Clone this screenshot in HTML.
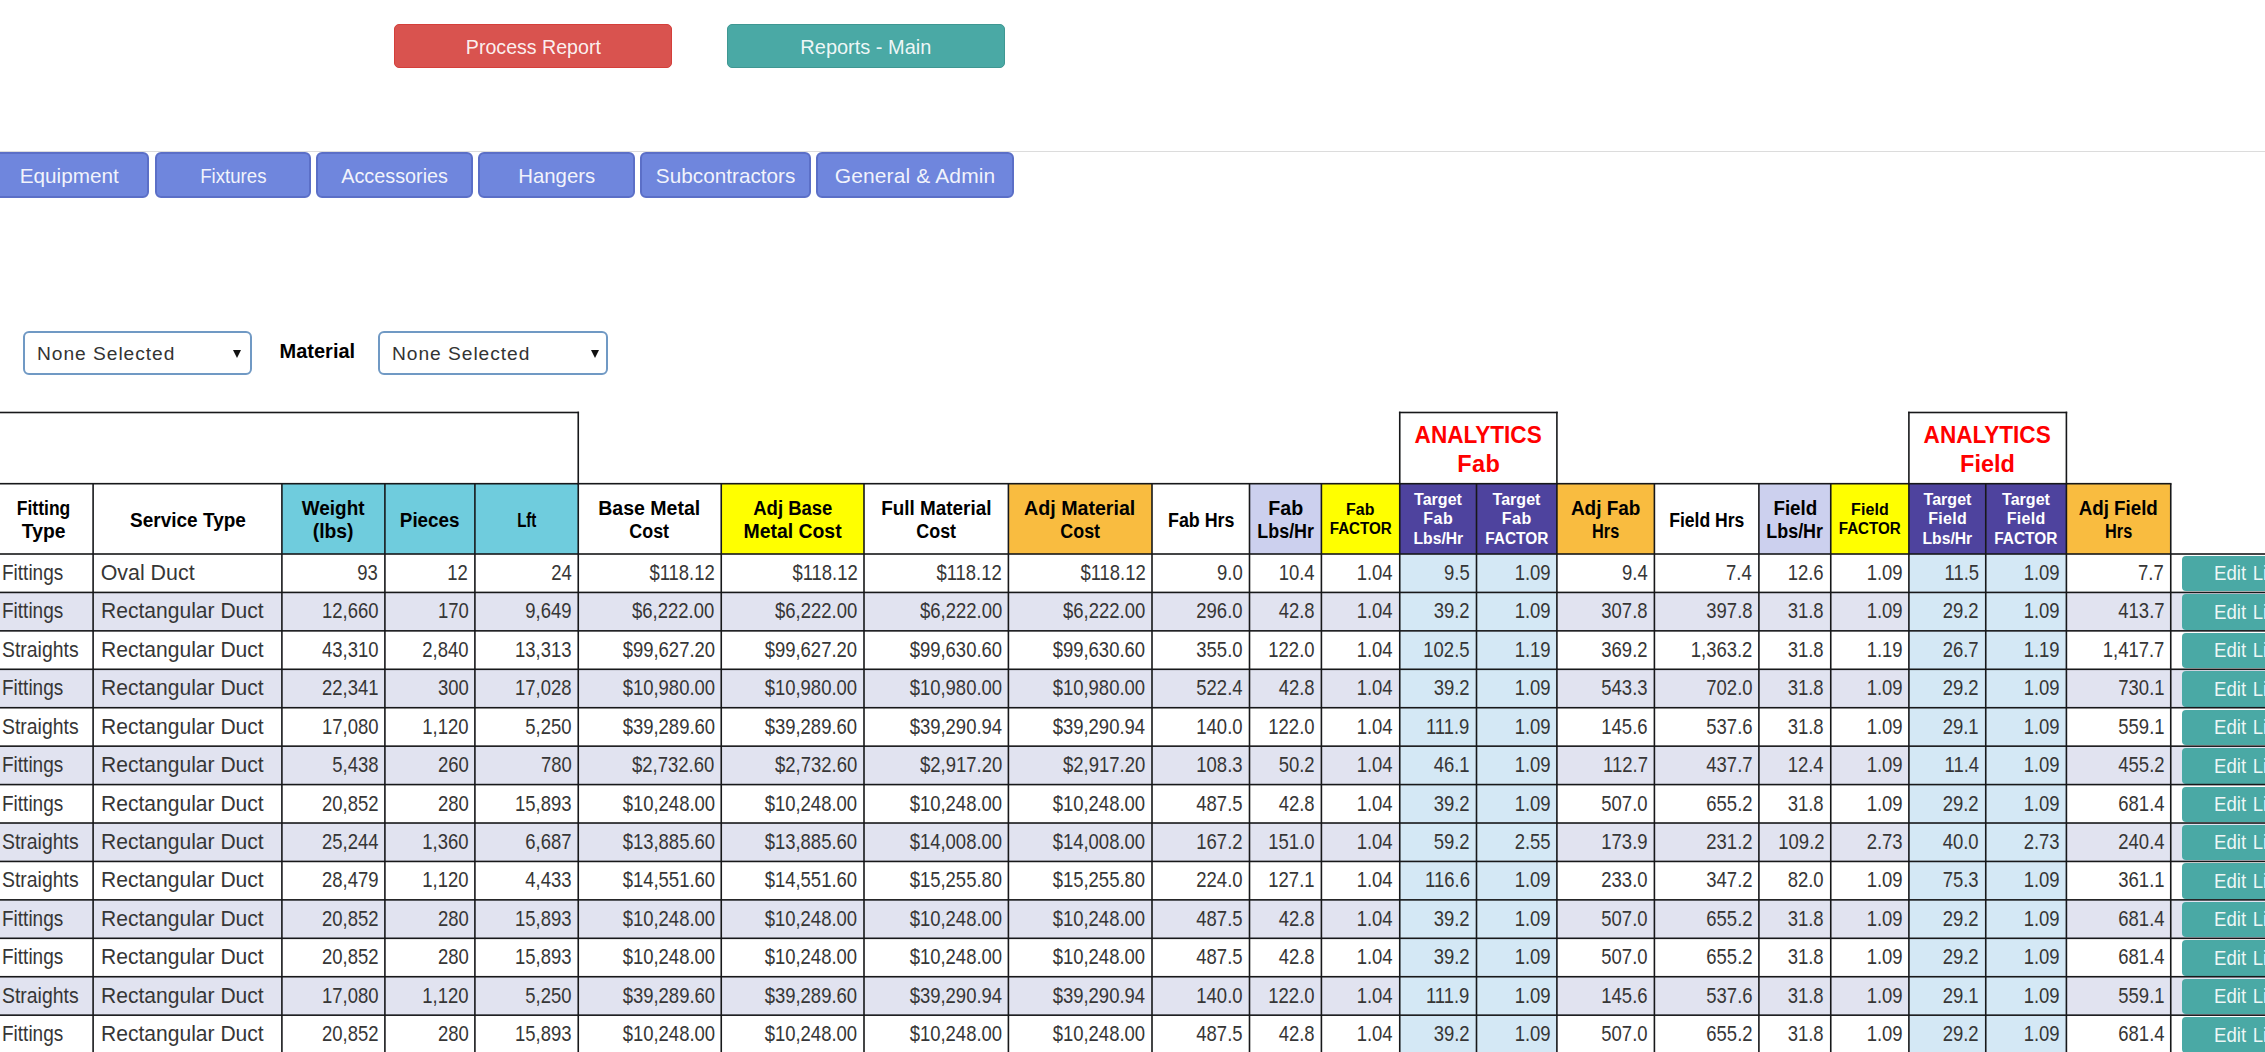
<!DOCTYPE html>
<html><head><meta charset="utf-8"><title>Report</title>
<style>
*{box-sizing:border-box;margin:0;padding:0}
html,body{width:2265px;height:1052px;overflow:hidden;background:#fff}
body{position:relative;font-family:"Liberation Sans",sans-serif;color:#1a1a1a}
.a{position:absolute}
.btn{position:absolute;color:rgba(255,255,255,.92);text-align:center;border-radius:5px;white-space:nowrap}
.top{height:44px;line-height:44.6px;font-size:21px}
.nav{top:152px;height:46px;line-height:44px;font-size:21px;background:#6f86dd;border:2px solid #5b6fc7;border-radius:6px}
.sel{position:absolute;top:331px;height:44px;border:2px solid #7099c4;border-radius:6px;background:#fff;font-size:19.2px;line-height:41px;padding-left:12px;color:#333;white-space:nowrap}
.sel i{position:absolute;top:16.5px;width:0;height:0;border-left:4.2px solid transparent;border-right:4.2px solid transparent;border-top:8px solid #111}
.bg{position:absolute}
.h,.hs,.hw{position:absolute;display:flex;flex-direction:column;justify-content:center;align-items:center;text-align:center;font-weight:bold;color:#000;white-space:nowrap}
.h{font-size:20px;line-height:22.8px;padding-top:2.4px}
.hs{font-size:16px;line-height:19px}
.hw{font-size:16px;line-height:19.4px;color:#fff}
.an{position:absolute;display:flex;flex-direction:column;justify-content:center;align-items:center;text-align:center;font-weight:bold;color:#ff0000;font-size:23.5px;line-height:29px;background:#fff;white-space:nowrap;padding-top:4px}
.d{position:absolute;font-size:21.4px;white-space:nowrap;color:#363636}
.r{text-align:right;padding-right:7.2px}
.r span{display:inline-block;transform:scaleX(.863);transform-origin:100% 50%}
.l{text-align:left;padding-left:6.5px}
.l2{padding-left:7.5px}
.eb{position:absolute;left:2182px;width:120px;background:#4aa9a5;color:rgba(255,255,255,.92);border-radius:4px;font-size:20.8px;padding-left:31.5px;white-space:nowrap}
svg{position:absolute;left:0;top:0}
</style></head><body>

<div class="btn top" style="left:394px;top:24px;width:278px;background:#d9534f;border:1px solid #d43f3a"><span style="display:inline-block;transform:scaleX(0.9327);transform-origin:50% 50%">Process Report</span></div>
<div class="btn top" style="left:727px;top:24px;width:278px;background:#4aa9a5;border:1px solid #3f9792"><span style="display:inline-block;transform:scaleX(0.9513);transform-origin:50% 50%">Reports - Main</span></div>
<div class="a" style="left:0;top:151px;width:2265px;height:1px;background:#dcdcdc"></div>
<div class="btn nav" style="left:-10px;width:159px"><span style="display:inline-block;transform:scaleX(0.9863);transform-origin:50% 50%">Equipment</span></div>
<div class="btn nav" style="left:155px;width:156px"><span style="display:inline-block;transform:scaleX(0.8882);transform-origin:50% 50%">Fixtures</span></div>
<div class="btn nav" style="left:316px;width:157px"><span style="display:inline-block;transform:scaleX(0.9427);transform-origin:50% 50%">Accessories</span></div>
<div class="btn nav" style="left:478px;width:157px"><span style="display:inline-block;transform:scaleX(0.9695);transform-origin:50% 50%">Hangers</span></div>
<div class="btn nav" style="left:640px;width:171px"><span style="display:inline-block;transform:scaleX(0.9877);transform-origin:50% 50%">Subcontractors</span></div>
<div class="btn nav" style="left:816px;width:198px"><span style="letter-spacing:0.126px;margin-right:-0.126px">General &amp; Admin</span></div>
<div class="sel" style="left:23px;width:229px"><span style="letter-spacing:0.958px;margin-right:-0.958px">None Selected</span><i style="right:8.8px"></i></div>
<div class="a" style="left:279px;top:338px;font-size:20.3px;font-weight:bold;color:#000;line-height:27px;white-space:nowrap"><span style="display:inline-block;transform:scaleX(0.9865);transform-origin:50% 50%">Material</span></div>
<div class="sel" style="left:378px;width:230px"><span style="letter-spacing:0.958px;margin-right:-0.958px">None Selected</span><i style="right:7.3px"></i></div>
<div class="h" style="left:-5px;top:484px;width:98px;height:70px;background:#fff"><span style="display:inline-block;transform:scaleX(0.8749);transform-origin:50% 50%">Fitting</span><span style="display:inline-block;transform:scaleX(0.9651);transform-origin:50% 50%">Type</span></div>
<div class="h" style="left:93px;top:484px;width:189px;height:70px;background:#fff"><span style="display:inline-block;transform:scaleX(0.9503);transform-origin:50% 50%">Service Type</span></div>
<div class="h" style="left:282px;top:484px;width:103px;height:70px;background:#6fccdd"><span style="display:inline-block;transform:scaleX(0.9455);transform-origin:50% 50%">Weight</span><span style="display:inline-block;transform:scaleX(0.9678);transform-origin:50% 50%">(lbs)</span></div>
<div class="h" style="left:385px;top:484px;width:90px;height:70px;background:#6fccdd"><span style="display:inline-block;transform:scaleX(0.9435);transform-origin:50% 50%">Pieces</span></div>
<div class="h" style="left:475px;top:484px;width:103px;height:70px;background:#6fccdd"><span style="display:inline-block;transform:scaleX(0.7537);transform-origin:50% 50%">Lft</span></div>
<div class="h" style="left:578px;top:484px;width:143px;height:70px;background:#fff"><span style="display:inline-block;transform:scaleX(0.9763);transform-origin:50% 50%">Base Metal</span><span style="display:inline-block;transform:scaleX(0.8932);transform-origin:50% 50%">Cost</span></div>
<div class="h" style="left:721px;top:484px;width:143px;height:70px;background:#ffff00"><span style="display:inline-block;transform:scaleX(0.9244);transform-origin:50% 50%">Adj Base</span><span style="display:inline-block;transform:scaleX(0.9705);transform-origin:50% 50%">Metal Cost</span></div>
<div class="h" style="left:864px;top:484px;width:144px;height:70px;background:#fff"><span style="display:inline-block;transform:scaleX(0.9446);transform-origin:50% 50%">Full Material</span><span style="display:inline-block;transform:scaleX(0.8932);transform-origin:50% 50%">Cost</span></div>
<div class="h" style="left:1008px;top:484px;width:144px;height:70px;background:#f9bc40"><span style="display:inline-block;transform:scaleX(0.9814);transform-origin:50% 50%">Adj Material</span><span style="display:inline-block;transform:scaleX(0.8932);transform-origin:50% 50%">Cost</span></div>
<div class="h" style="left:1152px;top:484px;width:98px;height:70px;background:#fff"><span style="display:inline-block;transform:scaleX(0.8931);transform-origin:50% 50%">Fab Hrs</span></div>
<div class="h" style="left:1250px;top:484px;width:71px;height:70px;background:#ccd0ee"><span style="display:inline-block;transform:scaleX(0.9828);transform-origin:50% 50%">Fab</span><span style="display:inline-block;transform:scaleX(0.8952);transform-origin:50% 50%">Lbs/Hr</span></div>
<div class="hs" style="left:1321px;top:484px;width:79px;height:70px;background:#ffff00"><span style="display:inline-block;transform:scaleX(0.9938);transform-origin:50% 50%">Fab</span><span style="display:inline-block;transform:scaleX(0.9472);transform-origin:50% 50%">FACTOR</span></div>
<div class="hw" style="left:1400px;top:484px;width:76px;height:70px;background:#4e439e"><span style="letter-spacing:0.043px;margin-right:-0.043px">Target</span><span style="letter-spacing:0.539px;margin-right:-0.539px">Fab</span><span style="display:inline-block;transform:scaleX(0.9829);transform-origin:50% 50%">Lbs/Hr</span></div>
<div class="hw" style="left:1476px;top:484px;width:81px;height:70px;background:#4e439e"><span style="letter-spacing:0.043px;margin-right:-0.043px">Target</span><span style="letter-spacing:0.539px;margin-right:-0.539px">Fab</span><span style="display:inline-block;transform:scaleX(0.9626);transform-origin:50% 50%">FACTOR</span></div>
<div class="h" style="left:1557px;top:484px;width:97px;height:70px;background:#f9bc40"><span style="display:inline-block;transform:scaleX(0.9472);transform-origin:50% 50%">Adj Fab</span><span style="display:inline-block;transform:scaleX(0.8145);transform-origin:50% 50%">Hrs</span></div>
<div class="h" style="left:1654px;top:484px;width:105px;height:70px;background:#fff"><span style="display:inline-block;transform:scaleX(0.8786);transform-origin:50% 50%">Field Hrs</span></div>
<div class="h" style="left:1759px;top:484px;width:72px;height:70px;background:#ccd0ee"><span style="display:inline-block;transform:scaleX(0.9392);transform-origin:50% 50%">Field</span><span style="display:inline-block;transform:scaleX(0.8952);transform-origin:50% 50%">Lbs/Hr</span></div>
<div class="hs" style="left:1831px;top:484px;width:78px;height:70px;background:#ffff00"><span style="letter-spacing:0.109px;margin-right:-0.109px">Field</span><span style="display:inline-block;transform:scaleX(0.9472);transform-origin:50% 50%">FACTOR</span></div>
<div class="hw" style="left:1909px;top:484px;width:77px;height:70px;background:#4e439e"><span style="letter-spacing:0.043px;margin-right:-0.043px">Target</span><span style="letter-spacing:0.297px;margin-right:-0.297px">Field</span><span style="display:inline-block;transform:scaleX(0.9829);transform-origin:50% 50%">Lbs/Hr</span></div>
<div class="hw" style="left:1986px;top:484px;width:80px;height:70px;background:#4e439e"><span style="letter-spacing:0.043px;margin-right:-0.043px">Target</span><span style="letter-spacing:0.297px;margin-right:-0.297px">Field</span><span style="display:inline-block;transform:scaleX(0.9626);transform-origin:50% 50%">FACTOR</span></div>
<div class="h" style="left:2066px;top:484px;width:105px;height:70px;background:#f9bc40"><span style="display:inline-block;transform:scaleX(0.9372);transform-origin:50% 50%">Adj Field</span><span style="display:inline-block;transform:scaleX(0.8145);transform-origin:50% 50%">Hrs</span></div>
<div class="an" style="left:1400px;top:412px;width:157px;height:72px"><span style="display:inline-block;transform:scaleX(0.961);transform-origin:50% 50%">ANALYTICS</span><span style="letter-spacing:0.413px;margin-right:-0.413px">Fab</span></div>
<div class="an" style="left:1909px;top:412px;width:157px;height:72px"><span style="display:inline-block;transform:scaleX(0.961);transform-origin:50% 50%">ANALYTICS</span><span>Field</span></div>
<div class="bg" style="left:1400px;top:554px;width:76px;height:38px;background:#d4e8f5"></div>
<div class="bg" style="left:1476px;top:554px;width:81px;height:38px;background:#d4e8f5"></div>
<div class="bg" style="left:1909px;top:554px;width:77px;height:38px;background:#d4e8f5"></div>
<div class="bg" style="left:1986px;top:554px;width:80px;height:38px;background:#d4e8f5"></div>
<div class="d l" style="left:-5px;top:554px;width:98px;height:38px;line-height:38px;padding-left:6.60px"><span style="display:inline-block;transform:scaleX(0.8885);transform-origin:0 50%">Fittings</span></div>
<div class="d l l2" style="left:93px;top:554px;width:189px;height:38px;line-height:38px;padding-left:7.70px"><span>Oval Duct</span></div>
<div class="d r" style="left:282px;top:554px;width:103px;height:38px;line-height:38px;padding-right:6.80px"><span>93</span></div>
<div class="d r" style="left:385px;top:554px;width:90px;height:38px;line-height:38px;padding-right:6.80px"><span>12</span></div>
<div class="d r" style="left:475px;top:554px;width:103px;height:38px;line-height:38px;padding-right:6.45px"><span>24</span></div>
<div class="d r" style="left:578px;top:554px;width:143px;height:38px;line-height:38px;padding-right:6.45px"><span>$118.12</span></div>
<div class="d r" style="left:721px;top:554px;width:143px;height:38px;line-height:38px;padding-right:6.70px"><span>$118.12</span></div>
<div class="d r" style="left:864px;top:554px;width:144px;height:38px;line-height:38px;padding-right:6.30px"><span>$118.12</span></div>
<div class="d r" style="left:1008px;top:554px;width:144px;height:38px;line-height:38px;padding-right:6.70px"><span>$118.12</span></div>
<div class="d r" style="left:1152px;top:554px;width:98px;height:38px;line-height:38px;padding-right:7.20px"><span>9.0</span></div>
<div class="d r" style="left:1250px;top:554px;width:71px;height:38px;line-height:38px;padding-right:6.30px"><span>10.4</span></div>
<div class="d r" style="left:1321px;top:554px;width:79px;height:38px;line-height:38px;padding-right:6.95px"><span>1.04</span></div>
<div class="d r" style="left:1400px;top:554px;width:76px;height:38px;line-height:38px;padding-right:6.20px"><span>9.5</span></div>
<div class="d r" style="left:1476px;top:554px;width:81px;height:38px;line-height:38px;padding-right:6.80px"><span>1.09</span></div>
<div class="d r" style="left:1557px;top:554px;width:97px;height:38px;line-height:38px;padding-right:6.30px"><span>9.4</span></div>
<div class="d r" style="left:1654px;top:554px;width:105px;height:38px;line-height:38px;padding-right:6.80px"><span>7.4</span></div>
<div class="d r" style="left:1759px;top:554px;width:72px;height:38px;line-height:38px;padding-right:6.95px"><span>12.6</span></div>
<div class="d r" style="left:1831px;top:554px;width:78px;height:38px;line-height:38px;padding-right:6.80px"><span>1.09</span></div>
<div class="d r" style="left:1909px;top:554px;width:77px;height:38px;line-height:38px;padding-right:6.95px"><span>11.5</span></div>
<div class="d r" style="left:1986px;top:554px;width:80px;height:38px;line-height:38px;padding-right:6.30px"><span>1.09</span></div>
<div class="d r" style="left:2066px;top:554px;width:105px;height:38px;line-height:38px;padding-right:6.95px"><span>7.7</span></div>
<div class="eb" style="top:556px;height:35px;line-height:34px;word-spacing:1.6px"><span style="display:inline-block;transform:scaleX(0.8957);transform-origin:0 50%">Edit Line</span></div>
<div class="bg" style="left:0;top:592px;width:2265px;height:39px;background:#e1e3f0"></div>
<div class="bg" style="left:1400px;top:592px;width:76px;height:39px;background:#d4e8f5"></div>
<div class="bg" style="left:1476px;top:592px;width:81px;height:39px;background:#d4e8f5"></div>
<div class="bg" style="left:1909px;top:592px;width:77px;height:39px;background:#d4e8f5"></div>
<div class="bg" style="left:1986px;top:592px;width:80px;height:39px;background:#d4e8f5"></div>
<div class="d l" style="left:-5px;top:592px;width:98px;height:39px;line-height:39px;padding-left:6.60px"><span style="display:inline-block;transform:scaleX(0.8885);transform-origin:0 50%">Fittings</span></div>
<div class="d l l2" style="left:93px;top:592px;width:189px;height:39px;line-height:39px;padding-left:7.70px"><span style="display:inline-block;transform:scaleX(0.9843);transform-origin:0 50%">Rectangular Duct</span></div>
<div class="d r" style="left:282px;top:592px;width:103px;height:39px;line-height:39px;padding-right:6.80px"><span>12,660</span></div>
<div class="d r" style="left:385px;top:592px;width:90px;height:39px;line-height:39px;padding-right:6.80px"><span>170</span></div>
<div class="d r" style="left:475px;top:592px;width:103px;height:39px;line-height:39px;padding-right:6.45px"><span>9,649</span></div>
<div class="d r" style="left:578px;top:592px;width:143px;height:39px;line-height:39px;padding-right:6.45px"><span>$6,222.00</span></div>
<div class="d r" style="left:721px;top:592px;width:143px;height:39px;line-height:39px;padding-right:6.70px"><span>$6,222.00</span></div>
<div class="d r" style="left:864px;top:592px;width:144px;height:39px;line-height:39px;padding-right:6.30px"><span>$6,222.00</span></div>
<div class="d r" style="left:1008px;top:592px;width:144px;height:39px;line-height:39px;padding-right:6.70px"><span>$6,222.00</span></div>
<div class="d r" style="left:1152px;top:592px;width:98px;height:39px;line-height:39px;padding-right:7.20px"><span>296.0</span></div>
<div class="d r" style="left:1250px;top:592px;width:71px;height:39px;line-height:39px;padding-right:6.30px"><span>42.8</span></div>
<div class="d r" style="left:1321px;top:592px;width:79px;height:39px;line-height:39px;padding-right:6.95px"><span>1.04</span></div>
<div class="d r" style="left:1400px;top:592px;width:76px;height:39px;line-height:39px;padding-right:6.20px"><span>39.2</span></div>
<div class="d r" style="left:1476px;top:592px;width:81px;height:39px;line-height:39px;padding-right:6.80px"><span>1.09</span></div>
<div class="d r" style="left:1557px;top:592px;width:97px;height:39px;line-height:39px;padding-right:6.30px"><span>307.8</span></div>
<div class="d r" style="left:1654px;top:592px;width:105px;height:39px;line-height:39px;padding-right:6.80px"><span>397.8</span></div>
<div class="d r" style="left:1759px;top:592px;width:72px;height:39px;line-height:39px;padding-right:6.95px"><span>31.8</span></div>
<div class="d r" style="left:1831px;top:592px;width:78px;height:39px;line-height:39px;padding-right:6.80px"><span>1.09</span></div>
<div class="d r" style="left:1909px;top:592px;width:77px;height:39px;line-height:39px;padding-right:6.95px"><span>29.2</span></div>
<div class="d r" style="left:1986px;top:592px;width:80px;height:39px;line-height:39px;padding-right:6.30px"><span>1.09</span></div>
<div class="d r" style="left:2066px;top:592px;width:105px;height:39px;line-height:39px;padding-right:6.95px"><span>413.7</span></div>
<div class="eb" style="top:594px;height:36px;line-height:35px;word-spacing:1.6px"><span style="display:inline-block;transform:scaleX(0.8957);transform-origin:0 50%">Edit Line</span></div>
<div class="bg" style="left:1400px;top:631px;width:76px;height:38px;background:#d4e8f5"></div>
<div class="bg" style="left:1476px;top:631px;width:81px;height:38px;background:#d4e8f5"></div>
<div class="bg" style="left:1909px;top:631px;width:77px;height:38px;background:#d4e8f5"></div>
<div class="bg" style="left:1986px;top:631px;width:80px;height:38px;background:#d4e8f5"></div>
<div class="d l" style="left:-5px;top:631px;width:98px;height:38px;line-height:38px;padding-left:6.60px"><span style="display:inline-block;transform:scaleX(0.9078);transform-origin:0 50%">Straights</span></div>
<div class="d l l2" style="left:93px;top:631px;width:189px;height:38px;line-height:38px;padding-left:7.70px"><span style="display:inline-block;transform:scaleX(0.9843);transform-origin:0 50%">Rectangular Duct</span></div>
<div class="d r" style="left:282px;top:631px;width:103px;height:38px;line-height:38px;padding-right:6.80px"><span>43,310</span></div>
<div class="d r" style="left:385px;top:631px;width:90px;height:38px;line-height:38px;padding-right:6.80px"><span>2,840</span></div>
<div class="d r" style="left:475px;top:631px;width:103px;height:38px;line-height:38px;padding-right:6.45px"><span>13,313</span></div>
<div class="d r" style="left:578px;top:631px;width:143px;height:38px;line-height:38px;padding-right:6.45px"><span>$99,627.20</span></div>
<div class="d r" style="left:721px;top:631px;width:143px;height:38px;line-height:38px;padding-right:6.70px"><span>$99,627.20</span></div>
<div class="d r" style="left:864px;top:631px;width:144px;height:38px;line-height:38px;padding-right:6.30px"><span>$99,630.60</span></div>
<div class="d r" style="left:1008px;top:631px;width:144px;height:38px;line-height:38px;padding-right:6.70px"><span>$99,630.60</span></div>
<div class="d r" style="left:1152px;top:631px;width:98px;height:38px;line-height:38px;padding-right:7.20px"><span>355.0</span></div>
<div class="d r" style="left:1250px;top:631px;width:71px;height:38px;line-height:38px;padding-right:6.30px"><span>122.0</span></div>
<div class="d r" style="left:1321px;top:631px;width:79px;height:38px;line-height:38px;padding-right:6.95px"><span>1.04</span></div>
<div class="d r" style="left:1400px;top:631px;width:76px;height:38px;line-height:38px;padding-right:6.20px"><span>102.5</span></div>
<div class="d r" style="left:1476px;top:631px;width:81px;height:38px;line-height:38px;padding-right:6.80px"><span>1.19</span></div>
<div class="d r" style="left:1557px;top:631px;width:97px;height:38px;line-height:38px;padding-right:6.30px"><span>369.2</span></div>
<div class="d r" style="left:1654px;top:631px;width:105px;height:38px;line-height:38px;padding-right:6.80px"><span>1,363.2</span></div>
<div class="d r" style="left:1759px;top:631px;width:72px;height:38px;line-height:38px;padding-right:6.95px"><span>31.8</span></div>
<div class="d r" style="left:1831px;top:631px;width:78px;height:38px;line-height:38px;padding-right:6.80px"><span>1.19</span></div>
<div class="d r" style="left:1909px;top:631px;width:77px;height:38px;line-height:38px;padding-right:6.95px"><span>26.7</span></div>
<div class="d r" style="left:1986px;top:631px;width:80px;height:38px;line-height:38px;padding-right:6.30px"><span>1.19</span></div>
<div class="d r" style="left:2066px;top:631px;width:105px;height:38px;line-height:38px;padding-right:6.95px"><span>1,417.7</span></div>
<div class="eb" style="top:633px;height:35px;line-height:34px;word-spacing:1.6px"><span style="display:inline-block;transform:scaleX(0.8957);transform-origin:0 50%">Edit Line</span></div>
<div class="bg" style="left:0;top:669px;width:2265px;height:39px;background:#e1e3f0"></div>
<div class="bg" style="left:1400px;top:669px;width:76px;height:39px;background:#d4e8f5"></div>
<div class="bg" style="left:1476px;top:669px;width:81px;height:39px;background:#d4e8f5"></div>
<div class="bg" style="left:1909px;top:669px;width:77px;height:39px;background:#d4e8f5"></div>
<div class="bg" style="left:1986px;top:669px;width:80px;height:39px;background:#d4e8f5"></div>
<div class="d l" style="left:-5px;top:669px;width:98px;height:39px;line-height:39px;padding-left:6.60px"><span style="display:inline-block;transform:scaleX(0.8885);transform-origin:0 50%">Fittings</span></div>
<div class="d l l2" style="left:93px;top:669px;width:189px;height:39px;line-height:39px;padding-left:7.70px"><span style="display:inline-block;transform:scaleX(0.9843);transform-origin:0 50%">Rectangular Duct</span></div>
<div class="d r" style="left:282px;top:669px;width:103px;height:39px;line-height:39px;padding-right:6.80px"><span>22,341</span></div>
<div class="d r" style="left:385px;top:669px;width:90px;height:39px;line-height:39px;padding-right:6.80px"><span>300</span></div>
<div class="d r" style="left:475px;top:669px;width:103px;height:39px;line-height:39px;padding-right:6.45px"><span>17,028</span></div>
<div class="d r" style="left:578px;top:669px;width:143px;height:39px;line-height:39px;padding-right:6.45px"><span>$10,980.00</span></div>
<div class="d r" style="left:721px;top:669px;width:143px;height:39px;line-height:39px;padding-right:6.70px"><span>$10,980.00</span></div>
<div class="d r" style="left:864px;top:669px;width:144px;height:39px;line-height:39px;padding-right:6.30px"><span>$10,980.00</span></div>
<div class="d r" style="left:1008px;top:669px;width:144px;height:39px;line-height:39px;padding-right:6.70px"><span>$10,980.00</span></div>
<div class="d r" style="left:1152px;top:669px;width:98px;height:39px;line-height:39px;padding-right:7.20px"><span>522.4</span></div>
<div class="d r" style="left:1250px;top:669px;width:71px;height:39px;line-height:39px;padding-right:6.30px"><span>42.8</span></div>
<div class="d r" style="left:1321px;top:669px;width:79px;height:39px;line-height:39px;padding-right:6.95px"><span>1.04</span></div>
<div class="d r" style="left:1400px;top:669px;width:76px;height:39px;line-height:39px;padding-right:6.20px"><span>39.2</span></div>
<div class="d r" style="left:1476px;top:669px;width:81px;height:39px;line-height:39px;padding-right:6.80px"><span>1.09</span></div>
<div class="d r" style="left:1557px;top:669px;width:97px;height:39px;line-height:39px;padding-right:6.30px"><span>543.3</span></div>
<div class="d r" style="left:1654px;top:669px;width:105px;height:39px;line-height:39px;padding-right:6.80px"><span>702.0</span></div>
<div class="d r" style="left:1759px;top:669px;width:72px;height:39px;line-height:39px;padding-right:6.95px"><span>31.8</span></div>
<div class="d r" style="left:1831px;top:669px;width:78px;height:39px;line-height:39px;padding-right:6.80px"><span>1.09</span></div>
<div class="d r" style="left:1909px;top:669px;width:77px;height:39px;line-height:39px;padding-right:6.95px"><span>29.2</span></div>
<div class="d r" style="left:1986px;top:669px;width:80px;height:39px;line-height:39px;padding-right:6.30px"><span>1.09</span></div>
<div class="d r" style="left:2066px;top:669px;width:105px;height:39px;line-height:39px;padding-right:6.95px"><span>730.1</span></div>
<div class="eb" style="top:671px;height:36px;line-height:35px;word-spacing:1.6px"><span style="display:inline-block;transform:scaleX(0.8957);transform-origin:0 50%">Edit Line</span></div>
<div class="bg" style="left:1400px;top:708px;width:76px;height:38px;background:#d4e8f5"></div>
<div class="bg" style="left:1476px;top:708px;width:81px;height:38px;background:#d4e8f5"></div>
<div class="bg" style="left:1909px;top:708px;width:77px;height:38px;background:#d4e8f5"></div>
<div class="bg" style="left:1986px;top:708px;width:80px;height:38px;background:#d4e8f5"></div>
<div class="d l" style="left:-5px;top:708px;width:98px;height:38px;line-height:38px;padding-left:6.60px"><span style="display:inline-block;transform:scaleX(0.9078);transform-origin:0 50%">Straights</span></div>
<div class="d l l2" style="left:93px;top:708px;width:189px;height:38px;line-height:38px;padding-left:7.70px"><span style="display:inline-block;transform:scaleX(0.9843);transform-origin:0 50%">Rectangular Duct</span></div>
<div class="d r" style="left:282px;top:708px;width:103px;height:38px;line-height:38px;padding-right:6.80px"><span>17,080</span></div>
<div class="d r" style="left:385px;top:708px;width:90px;height:38px;line-height:38px;padding-right:6.80px"><span>1,120</span></div>
<div class="d r" style="left:475px;top:708px;width:103px;height:38px;line-height:38px;padding-right:6.45px"><span>5,250</span></div>
<div class="d r" style="left:578px;top:708px;width:143px;height:38px;line-height:38px;padding-right:6.45px"><span>$39,289.60</span></div>
<div class="d r" style="left:721px;top:708px;width:143px;height:38px;line-height:38px;padding-right:6.70px"><span>$39,289.60</span></div>
<div class="d r" style="left:864px;top:708px;width:144px;height:38px;line-height:38px;padding-right:6.30px"><span>$39,290.94</span></div>
<div class="d r" style="left:1008px;top:708px;width:144px;height:38px;line-height:38px;padding-right:6.70px"><span>$39,290.94</span></div>
<div class="d r" style="left:1152px;top:708px;width:98px;height:38px;line-height:38px;padding-right:7.20px"><span>140.0</span></div>
<div class="d r" style="left:1250px;top:708px;width:71px;height:38px;line-height:38px;padding-right:6.30px"><span>122.0</span></div>
<div class="d r" style="left:1321px;top:708px;width:79px;height:38px;line-height:38px;padding-right:6.95px"><span>1.04</span></div>
<div class="d r" style="left:1400px;top:708px;width:76px;height:38px;line-height:38px;padding-right:6.20px"><span>111.9</span></div>
<div class="d r" style="left:1476px;top:708px;width:81px;height:38px;line-height:38px;padding-right:6.80px"><span>1.09</span></div>
<div class="d r" style="left:1557px;top:708px;width:97px;height:38px;line-height:38px;padding-right:6.30px"><span>145.6</span></div>
<div class="d r" style="left:1654px;top:708px;width:105px;height:38px;line-height:38px;padding-right:6.80px"><span>537.6</span></div>
<div class="d r" style="left:1759px;top:708px;width:72px;height:38px;line-height:38px;padding-right:6.95px"><span>31.8</span></div>
<div class="d r" style="left:1831px;top:708px;width:78px;height:38px;line-height:38px;padding-right:6.80px"><span>1.09</span></div>
<div class="d r" style="left:1909px;top:708px;width:77px;height:38px;line-height:38px;padding-right:6.95px"><span>29.1</span></div>
<div class="d r" style="left:1986px;top:708px;width:80px;height:38px;line-height:38px;padding-right:6.30px"><span>1.09</span></div>
<div class="d r" style="left:2066px;top:708px;width:105px;height:38px;line-height:38px;padding-right:6.95px"><span>559.1</span></div>
<div class="eb" style="top:710px;height:35px;line-height:34px;word-spacing:1.6px"><span style="display:inline-block;transform:scaleX(0.8957);transform-origin:0 50%">Edit Line</span></div>
<div class="bg" style="left:0;top:746px;width:2265px;height:39px;background:#e1e3f0"></div>
<div class="bg" style="left:1400px;top:746px;width:76px;height:39px;background:#d4e8f5"></div>
<div class="bg" style="left:1476px;top:746px;width:81px;height:39px;background:#d4e8f5"></div>
<div class="bg" style="left:1909px;top:746px;width:77px;height:39px;background:#d4e8f5"></div>
<div class="bg" style="left:1986px;top:746px;width:80px;height:39px;background:#d4e8f5"></div>
<div class="d l" style="left:-5px;top:746px;width:98px;height:39px;line-height:39px;padding-left:6.60px"><span style="display:inline-block;transform:scaleX(0.8885);transform-origin:0 50%">Fittings</span></div>
<div class="d l l2" style="left:93px;top:746px;width:189px;height:39px;line-height:39px;padding-left:7.70px"><span style="display:inline-block;transform:scaleX(0.9843);transform-origin:0 50%">Rectangular Duct</span></div>
<div class="d r" style="left:282px;top:746px;width:103px;height:39px;line-height:39px;padding-right:6.80px"><span>5,438</span></div>
<div class="d r" style="left:385px;top:746px;width:90px;height:39px;line-height:39px;padding-right:6.80px"><span>260</span></div>
<div class="d r" style="left:475px;top:746px;width:103px;height:39px;line-height:39px;padding-right:6.45px"><span>780</span></div>
<div class="d r" style="left:578px;top:746px;width:143px;height:39px;line-height:39px;padding-right:6.45px"><span>$2,732.60</span></div>
<div class="d r" style="left:721px;top:746px;width:143px;height:39px;line-height:39px;padding-right:6.70px"><span>$2,732.60</span></div>
<div class="d r" style="left:864px;top:746px;width:144px;height:39px;line-height:39px;padding-right:6.30px"><span>$2,917.20</span></div>
<div class="d r" style="left:1008px;top:746px;width:144px;height:39px;line-height:39px;padding-right:6.70px"><span>$2,917.20</span></div>
<div class="d r" style="left:1152px;top:746px;width:98px;height:39px;line-height:39px;padding-right:7.20px"><span>108.3</span></div>
<div class="d r" style="left:1250px;top:746px;width:71px;height:39px;line-height:39px;padding-right:6.30px"><span>50.2</span></div>
<div class="d r" style="left:1321px;top:746px;width:79px;height:39px;line-height:39px;padding-right:6.95px"><span>1.04</span></div>
<div class="d r" style="left:1400px;top:746px;width:76px;height:39px;line-height:39px;padding-right:6.20px"><span>46.1</span></div>
<div class="d r" style="left:1476px;top:746px;width:81px;height:39px;line-height:39px;padding-right:6.80px"><span>1.09</span></div>
<div class="d r" style="left:1557px;top:746px;width:97px;height:39px;line-height:39px;padding-right:6.30px"><span>112.7</span></div>
<div class="d r" style="left:1654px;top:746px;width:105px;height:39px;line-height:39px;padding-right:6.80px"><span>437.7</span></div>
<div class="d r" style="left:1759px;top:746px;width:72px;height:39px;line-height:39px;padding-right:6.95px"><span>12.4</span></div>
<div class="d r" style="left:1831px;top:746px;width:78px;height:39px;line-height:39px;padding-right:6.80px"><span>1.09</span></div>
<div class="d r" style="left:1909px;top:746px;width:77px;height:39px;line-height:39px;padding-right:6.95px"><span>11.4</span></div>
<div class="d r" style="left:1986px;top:746px;width:80px;height:39px;line-height:39px;padding-right:6.30px"><span>1.09</span></div>
<div class="d r" style="left:2066px;top:746px;width:105px;height:39px;line-height:39px;padding-right:6.95px"><span>455.2</span></div>
<div class="eb" style="top:748px;height:36px;line-height:35px;word-spacing:1.6px"><span style="display:inline-block;transform:scaleX(0.8957);transform-origin:0 50%">Edit Line</span></div>
<div class="bg" style="left:1400px;top:785px;width:76px;height:38px;background:#d4e8f5"></div>
<div class="bg" style="left:1476px;top:785px;width:81px;height:38px;background:#d4e8f5"></div>
<div class="bg" style="left:1909px;top:785px;width:77px;height:38px;background:#d4e8f5"></div>
<div class="bg" style="left:1986px;top:785px;width:80px;height:38px;background:#d4e8f5"></div>
<div class="d l" style="left:-5px;top:785px;width:98px;height:38px;line-height:38px;padding-left:6.60px"><span style="display:inline-block;transform:scaleX(0.8885);transform-origin:0 50%">Fittings</span></div>
<div class="d l l2" style="left:93px;top:785px;width:189px;height:38px;line-height:38px;padding-left:7.70px"><span style="display:inline-block;transform:scaleX(0.9843);transform-origin:0 50%">Rectangular Duct</span></div>
<div class="d r" style="left:282px;top:785px;width:103px;height:38px;line-height:38px;padding-right:6.80px"><span>20,852</span></div>
<div class="d r" style="left:385px;top:785px;width:90px;height:38px;line-height:38px;padding-right:6.80px"><span>280</span></div>
<div class="d r" style="left:475px;top:785px;width:103px;height:38px;line-height:38px;padding-right:6.45px"><span>15,893</span></div>
<div class="d r" style="left:578px;top:785px;width:143px;height:38px;line-height:38px;padding-right:6.45px"><span>$10,248.00</span></div>
<div class="d r" style="left:721px;top:785px;width:143px;height:38px;line-height:38px;padding-right:6.70px"><span>$10,248.00</span></div>
<div class="d r" style="left:864px;top:785px;width:144px;height:38px;line-height:38px;padding-right:6.30px"><span>$10,248.00</span></div>
<div class="d r" style="left:1008px;top:785px;width:144px;height:38px;line-height:38px;padding-right:6.70px"><span>$10,248.00</span></div>
<div class="d r" style="left:1152px;top:785px;width:98px;height:38px;line-height:38px;padding-right:7.20px"><span>487.5</span></div>
<div class="d r" style="left:1250px;top:785px;width:71px;height:38px;line-height:38px;padding-right:6.30px"><span>42.8</span></div>
<div class="d r" style="left:1321px;top:785px;width:79px;height:38px;line-height:38px;padding-right:6.95px"><span>1.04</span></div>
<div class="d r" style="left:1400px;top:785px;width:76px;height:38px;line-height:38px;padding-right:6.20px"><span>39.2</span></div>
<div class="d r" style="left:1476px;top:785px;width:81px;height:38px;line-height:38px;padding-right:6.80px"><span>1.09</span></div>
<div class="d r" style="left:1557px;top:785px;width:97px;height:38px;line-height:38px;padding-right:6.30px"><span>507.0</span></div>
<div class="d r" style="left:1654px;top:785px;width:105px;height:38px;line-height:38px;padding-right:6.80px"><span>655.2</span></div>
<div class="d r" style="left:1759px;top:785px;width:72px;height:38px;line-height:38px;padding-right:6.95px"><span>31.8</span></div>
<div class="d r" style="left:1831px;top:785px;width:78px;height:38px;line-height:38px;padding-right:6.80px"><span>1.09</span></div>
<div class="d r" style="left:1909px;top:785px;width:77px;height:38px;line-height:38px;padding-right:6.95px"><span>29.2</span></div>
<div class="d r" style="left:1986px;top:785px;width:80px;height:38px;line-height:38px;padding-right:6.30px"><span>1.09</span></div>
<div class="d r" style="left:2066px;top:785px;width:105px;height:38px;line-height:38px;padding-right:6.95px"><span>681.4</span></div>
<div class="eb" style="top:787px;height:35px;line-height:34px;word-spacing:1.6px"><span style="display:inline-block;transform:scaleX(0.8957);transform-origin:0 50%">Edit Line</span></div>
<div class="bg" style="left:0;top:823px;width:2265px;height:38px;background:#e1e3f0"></div>
<div class="bg" style="left:1400px;top:823px;width:76px;height:38px;background:#d4e8f5"></div>
<div class="bg" style="left:1476px;top:823px;width:81px;height:38px;background:#d4e8f5"></div>
<div class="bg" style="left:1909px;top:823px;width:77px;height:38px;background:#d4e8f5"></div>
<div class="bg" style="left:1986px;top:823px;width:80px;height:38px;background:#d4e8f5"></div>
<div class="d l" style="left:-5px;top:823px;width:98px;height:38px;line-height:38px;padding-left:6.60px"><span style="display:inline-block;transform:scaleX(0.9078);transform-origin:0 50%">Straights</span></div>
<div class="d l l2" style="left:93px;top:823px;width:189px;height:38px;line-height:38px;padding-left:7.70px"><span style="display:inline-block;transform:scaleX(0.9843);transform-origin:0 50%">Rectangular Duct</span></div>
<div class="d r" style="left:282px;top:823px;width:103px;height:38px;line-height:38px;padding-right:6.80px"><span>25,244</span></div>
<div class="d r" style="left:385px;top:823px;width:90px;height:38px;line-height:38px;padding-right:6.80px"><span>1,360</span></div>
<div class="d r" style="left:475px;top:823px;width:103px;height:38px;line-height:38px;padding-right:6.45px"><span>6,687</span></div>
<div class="d r" style="left:578px;top:823px;width:143px;height:38px;line-height:38px;padding-right:6.45px"><span>$13,885.60</span></div>
<div class="d r" style="left:721px;top:823px;width:143px;height:38px;line-height:38px;padding-right:6.70px"><span>$13,885.60</span></div>
<div class="d r" style="left:864px;top:823px;width:144px;height:38px;line-height:38px;padding-right:6.30px"><span>$14,008.00</span></div>
<div class="d r" style="left:1008px;top:823px;width:144px;height:38px;line-height:38px;padding-right:6.70px"><span>$14,008.00</span></div>
<div class="d r" style="left:1152px;top:823px;width:98px;height:38px;line-height:38px;padding-right:7.20px"><span>167.2</span></div>
<div class="d r" style="left:1250px;top:823px;width:71px;height:38px;line-height:38px;padding-right:6.30px"><span>151.0</span></div>
<div class="d r" style="left:1321px;top:823px;width:79px;height:38px;line-height:38px;padding-right:6.95px"><span>1.04</span></div>
<div class="d r" style="left:1400px;top:823px;width:76px;height:38px;line-height:38px;padding-right:6.20px"><span>59.2</span></div>
<div class="d r" style="left:1476px;top:823px;width:81px;height:38px;line-height:38px;padding-right:6.80px"><span>2.55</span></div>
<div class="d r" style="left:1557px;top:823px;width:97px;height:38px;line-height:38px;padding-right:6.30px"><span>173.9</span></div>
<div class="d r" style="left:1654px;top:823px;width:105px;height:38px;line-height:38px;padding-right:6.80px"><span>231.2</span></div>
<div class="d r" style="left:1759px;top:823px;width:72px;height:38px;line-height:38px;padding-right:6.95px"><span>109.2</span></div>
<div class="d r" style="left:1831px;top:823px;width:78px;height:38px;line-height:38px;padding-right:6.80px"><span>2.73</span></div>
<div class="d r" style="left:1909px;top:823px;width:77px;height:38px;line-height:38px;padding-right:6.95px"><span>40.0</span></div>
<div class="d r" style="left:1986px;top:823px;width:80px;height:38px;line-height:38px;padding-right:6.30px"><span>2.73</span></div>
<div class="d r" style="left:2066px;top:823px;width:105px;height:38px;line-height:38px;padding-right:6.95px"><span>240.4</span></div>
<div class="eb" style="top:825px;height:35px;line-height:34px;word-spacing:1.6px"><span style="display:inline-block;transform:scaleX(0.8957);transform-origin:0 50%">Edit Line</span></div>
<div class="bg" style="left:1400px;top:861px;width:76px;height:39px;background:#d4e8f5"></div>
<div class="bg" style="left:1476px;top:861px;width:81px;height:39px;background:#d4e8f5"></div>
<div class="bg" style="left:1909px;top:861px;width:77px;height:39px;background:#d4e8f5"></div>
<div class="bg" style="left:1986px;top:861px;width:80px;height:39px;background:#d4e8f5"></div>
<div class="d l" style="left:-5px;top:861px;width:98px;height:39px;line-height:39px;padding-left:6.60px"><span style="display:inline-block;transform:scaleX(0.9078);transform-origin:0 50%">Straights</span></div>
<div class="d l l2" style="left:93px;top:861px;width:189px;height:39px;line-height:39px;padding-left:7.70px"><span style="display:inline-block;transform:scaleX(0.9843);transform-origin:0 50%">Rectangular Duct</span></div>
<div class="d r" style="left:282px;top:861px;width:103px;height:39px;line-height:39px;padding-right:6.80px"><span>28,479</span></div>
<div class="d r" style="left:385px;top:861px;width:90px;height:39px;line-height:39px;padding-right:6.80px"><span>1,120</span></div>
<div class="d r" style="left:475px;top:861px;width:103px;height:39px;line-height:39px;padding-right:6.45px"><span>4,433</span></div>
<div class="d r" style="left:578px;top:861px;width:143px;height:39px;line-height:39px;padding-right:6.45px"><span>$14,551.60</span></div>
<div class="d r" style="left:721px;top:861px;width:143px;height:39px;line-height:39px;padding-right:6.70px"><span>$14,551.60</span></div>
<div class="d r" style="left:864px;top:861px;width:144px;height:39px;line-height:39px;padding-right:6.30px"><span>$15,255.80</span></div>
<div class="d r" style="left:1008px;top:861px;width:144px;height:39px;line-height:39px;padding-right:6.70px"><span>$15,255.80</span></div>
<div class="d r" style="left:1152px;top:861px;width:98px;height:39px;line-height:39px;padding-right:7.20px"><span>224.0</span></div>
<div class="d r" style="left:1250px;top:861px;width:71px;height:39px;line-height:39px;padding-right:6.30px"><span>127.1</span></div>
<div class="d r" style="left:1321px;top:861px;width:79px;height:39px;line-height:39px;padding-right:6.95px"><span>1.04</span></div>
<div class="d r" style="left:1400px;top:861px;width:76px;height:39px;line-height:39px;padding-right:6.20px"><span>116.6</span></div>
<div class="d r" style="left:1476px;top:861px;width:81px;height:39px;line-height:39px;padding-right:6.80px"><span>1.09</span></div>
<div class="d r" style="left:1557px;top:861px;width:97px;height:39px;line-height:39px;padding-right:6.30px"><span>233.0</span></div>
<div class="d r" style="left:1654px;top:861px;width:105px;height:39px;line-height:39px;padding-right:6.80px"><span>347.2</span></div>
<div class="d r" style="left:1759px;top:861px;width:72px;height:39px;line-height:39px;padding-right:6.95px"><span>82.0</span></div>
<div class="d r" style="left:1831px;top:861px;width:78px;height:39px;line-height:39px;padding-right:6.80px"><span>1.09</span></div>
<div class="d r" style="left:1909px;top:861px;width:77px;height:39px;line-height:39px;padding-right:6.95px"><span>75.3</span></div>
<div class="d r" style="left:1986px;top:861px;width:80px;height:39px;line-height:39px;padding-right:6.30px"><span>1.09</span></div>
<div class="d r" style="left:2066px;top:861px;width:105px;height:39px;line-height:39px;padding-right:6.95px"><span>361.1</span></div>
<div class="eb" style="top:863px;height:36px;line-height:35px;word-spacing:1.6px"><span style="display:inline-block;transform:scaleX(0.8957);transform-origin:0 50%">Edit Line</span></div>
<div class="bg" style="left:0;top:900px;width:2265px;height:38px;background:#e1e3f0"></div>
<div class="bg" style="left:1400px;top:900px;width:76px;height:38px;background:#d4e8f5"></div>
<div class="bg" style="left:1476px;top:900px;width:81px;height:38px;background:#d4e8f5"></div>
<div class="bg" style="left:1909px;top:900px;width:77px;height:38px;background:#d4e8f5"></div>
<div class="bg" style="left:1986px;top:900px;width:80px;height:38px;background:#d4e8f5"></div>
<div class="d l" style="left:-5px;top:900px;width:98px;height:38px;line-height:38px;padding-left:6.60px"><span style="display:inline-block;transform:scaleX(0.8885);transform-origin:0 50%">Fittings</span></div>
<div class="d l l2" style="left:93px;top:900px;width:189px;height:38px;line-height:38px;padding-left:7.70px"><span style="display:inline-block;transform:scaleX(0.9843);transform-origin:0 50%">Rectangular Duct</span></div>
<div class="d r" style="left:282px;top:900px;width:103px;height:38px;line-height:38px;padding-right:6.80px"><span>20,852</span></div>
<div class="d r" style="left:385px;top:900px;width:90px;height:38px;line-height:38px;padding-right:6.80px"><span>280</span></div>
<div class="d r" style="left:475px;top:900px;width:103px;height:38px;line-height:38px;padding-right:6.45px"><span>15,893</span></div>
<div class="d r" style="left:578px;top:900px;width:143px;height:38px;line-height:38px;padding-right:6.45px"><span>$10,248.00</span></div>
<div class="d r" style="left:721px;top:900px;width:143px;height:38px;line-height:38px;padding-right:6.70px"><span>$10,248.00</span></div>
<div class="d r" style="left:864px;top:900px;width:144px;height:38px;line-height:38px;padding-right:6.30px"><span>$10,248.00</span></div>
<div class="d r" style="left:1008px;top:900px;width:144px;height:38px;line-height:38px;padding-right:6.70px"><span>$10,248.00</span></div>
<div class="d r" style="left:1152px;top:900px;width:98px;height:38px;line-height:38px;padding-right:7.20px"><span>487.5</span></div>
<div class="d r" style="left:1250px;top:900px;width:71px;height:38px;line-height:38px;padding-right:6.30px"><span>42.8</span></div>
<div class="d r" style="left:1321px;top:900px;width:79px;height:38px;line-height:38px;padding-right:6.95px"><span>1.04</span></div>
<div class="d r" style="left:1400px;top:900px;width:76px;height:38px;line-height:38px;padding-right:6.20px"><span>39.2</span></div>
<div class="d r" style="left:1476px;top:900px;width:81px;height:38px;line-height:38px;padding-right:6.80px"><span>1.09</span></div>
<div class="d r" style="left:1557px;top:900px;width:97px;height:38px;line-height:38px;padding-right:6.30px"><span>507.0</span></div>
<div class="d r" style="left:1654px;top:900px;width:105px;height:38px;line-height:38px;padding-right:6.80px"><span>655.2</span></div>
<div class="d r" style="left:1759px;top:900px;width:72px;height:38px;line-height:38px;padding-right:6.95px"><span>31.8</span></div>
<div class="d r" style="left:1831px;top:900px;width:78px;height:38px;line-height:38px;padding-right:6.80px"><span>1.09</span></div>
<div class="d r" style="left:1909px;top:900px;width:77px;height:38px;line-height:38px;padding-right:6.95px"><span>29.2</span></div>
<div class="d r" style="left:1986px;top:900px;width:80px;height:38px;line-height:38px;padding-right:6.30px"><span>1.09</span></div>
<div class="d r" style="left:2066px;top:900px;width:105px;height:38px;line-height:38px;padding-right:6.95px"><span>681.4</span></div>
<div class="eb" style="top:902px;height:35px;line-height:34px;word-spacing:1.6px"><span style="display:inline-block;transform:scaleX(0.8957);transform-origin:0 50%">Edit Line</span></div>
<div class="bg" style="left:1400px;top:938px;width:76px;height:39px;background:#d4e8f5"></div>
<div class="bg" style="left:1476px;top:938px;width:81px;height:39px;background:#d4e8f5"></div>
<div class="bg" style="left:1909px;top:938px;width:77px;height:39px;background:#d4e8f5"></div>
<div class="bg" style="left:1986px;top:938px;width:80px;height:39px;background:#d4e8f5"></div>
<div class="d l" style="left:-5px;top:938px;width:98px;height:39px;line-height:39px;padding-left:6.60px"><span style="display:inline-block;transform:scaleX(0.8885);transform-origin:0 50%">Fittings</span></div>
<div class="d l l2" style="left:93px;top:938px;width:189px;height:39px;line-height:39px;padding-left:7.70px"><span style="display:inline-block;transform:scaleX(0.9843);transform-origin:0 50%">Rectangular Duct</span></div>
<div class="d r" style="left:282px;top:938px;width:103px;height:39px;line-height:39px;padding-right:6.80px"><span>20,852</span></div>
<div class="d r" style="left:385px;top:938px;width:90px;height:39px;line-height:39px;padding-right:6.80px"><span>280</span></div>
<div class="d r" style="left:475px;top:938px;width:103px;height:39px;line-height:39px;padding-right:6.45px"><span>15,893</span></div>
<div class="d r" style="left:578px;top:938px;width:143px;height:39px;line-height:39px;padding-right:6.45px"><span>$10,248.00</span></div>
<div class="d r" style="left:721px;top:938px;width:143px;height:39px;line-height:39px;padding-right:6.70px"><span>$10,248.00</span></div>
<div class="d r" style="left:864px;top:938px;width:144px;height:39px;line-height:39px;padding-right:6.30px"><span>$10,248.00</span></div>
<div class="d r" style="left:1008px;top:938px;width:144px;height:39px;line-height:39px;padding-right:6.70px"><span>$10,248.00</span></div>
<div class="d r" style="left:1152px;top:938px;width:98px;height:39px;line-height:39px;padding-right:7.20px"><span>487.5</span></div>
<div class="d r" style="left:1250px;top:938px;width:71px;height:39px;line-height:39px;padding-right:6.30px"><span>42.8</span></div>
<div class="d r" style="left:1321px;top:938px;width:79px;height:39px;line-height:39px;padding-right:6.95px"><span>1.04</span></div>
<div class="d r" style="left:1400px;top:938px;width:76px;height:39px;line-height:39px;padding-right:6.20px"><span>39.2</span></div>
<div class="d r" style="left:1476px;top:938px;width:81px;height:39px;line-height:39px;padding-right:6.80px"><span>1.09</span></div>
<div class="d r" style="left:1557px;top:938px;width:97px;height:39px;line-height:39px;padding-right:6.30px"><span>507.0</span></div>
<div class="d r" style="left:1654px;top:938px;width:105px;height:39px;line-height:39px;padding-right:6.80px"><span>655.2</span></div>
<div class="d r" style="left:1759px;top:938px;width:72px;height:39px;line-height:39px;padding-right:6.95px"><span>31.8</span></div>
<div class="d r" style="left:1831px;top:938px;width:78px;height:39px;line-height:39px;padding-right:6.80px"><span>1.09</span></div>
<div class="d r" style="left:1909px;top:938px;width:77px;height:39px;line-height:39px;padding-right:6.95px"><span>29.2</span></div>
<div class="d r" style="left:1986px;top:938px;width:80px;height:39px;line-height:39px;padding-right:6.30px"><span>1.09</span></div>
<div class="d r" style="left:2066px;top:938px;width:105px;height:39px;line-height:39px;padding-right:6.95px"><span>681.4</span></div>
<div class="eb" style="top:940px;height:36px;line-height:35px;word-spacing:1.6px"><span style="display:inline-block;transform:scaleX(0.8957);transform-origin:0 50%">Edit Line</span></div>
<div class="bg" style="left:0;top:977px;width:2265px;height:38px;background:#e1e3f0"></div>
<div class="bg" style="left:1400px;top:977px;width:76px;height:38px;background:#d4e8f5"></div>
<div class="bg" style="left:1476px;top:977px;width:81px;height:38px;background:#d4e8f5"></div>
<div class="bg" style="left:1909px;top:977px;width:77px;height:38px;background:#d4e8f5"></div>
<div class="bg" style="left:1986px;top:977px;width:80px;height:38px;background:#d4e8f5"></div>
<div class="d l" style="left:-5px;top:977px;width:98px;height:38px;line-height:38px;padding-left:6.60px"><span style="display:inline-block;transform:scaleX(0.9078);transform-origin:0 50%">Straights</span></div>
<div class="d l l2" style="left:93px;top:977px;width:189px;height:38px;line-height:38px;padding-left:7.70px"><span style="display:inline-block;transform:scaleX(0.9843);transform-origin:0 50%">Rectangular Duct</span></div>
<div class="d r" style="left:282px;top:977px;width:103px;height:38px;line-height:38px;padding-right:6.80px"><span>17,080</span></div>
<div class="d r" style="left:385px;top:977px;width:90px;height:38px;line-height:38px;padding-right:6.80px"><span>1,120</span></div>
<div class="d r" style="left:475px;top:977px;width:103px;height:38px;line-height:38px;padding-right:6.45px"><span>5,250</span></div>
<div class="d r" style="left:578px;top:977px;width:143px;height:38px;line-height:38px;padding-right:6.45px"><span>$39,289.60</span></div>
<div class="d r" style="left:721px;top:977px;width:143px;height:38px;line-height:38px;padding-right:6.70px"><span>$39,289.60</span></div>
<div class="d r" style="left:864px;top:977px;width:144px;height:38px;line-height:38px;padding-right:6.30px"><span>$39,290.94</span></div>
<div class="d r" style="left:1008px;top:977px;width:144px;height:38px;line-height:38px;padding-right:6.70px"><span>$39,290.94</span></div>
<div class="d r" style="left:1152px;top:977px;width:98px;height:38px;line-height:38px;padding-right:7.20px"><span>140.0</span></div>
<div class="d r" style="left:1250px;top:977px;width:71px;height:38px;line-height:38px;padding-right:6.30px"><span>122.0</span></div>
<div class="d r" style="left:1321px;top:977px;width:79px;height:38px;line-height:38px;padding-right:6.95px"><span>1.04</span></div>
<div class="d r" style="left:1400px;top:977px;width:76px;height:38px;line-height:38px;padding-right:6.20px"><span>111.9</span></div>
<div class="d r" style="left:1476px;top:977px;width:81px;height:38px;line-height:38px;padding-right:6.80px"><span>1.09</span></div>
<div class="d r" style="left:1557px;top:977px;width:97px;height:38px;line-height:38px;padding-right:6.30px"><span>145.6</span></div>
<div class="d r" style="left:1654px;top:977px;width:105px;height:38px;line-height:38px;padding-right:6.80px"><span>537.6</span></div>
<div class="d r" style="left:1759px;top:977px;width:72px;height:38px;line-height:38px;padding-right:6.95px"><span>31.8</span></div>
<div class="d r" style="left:1831px;top:977px;width:78px;height:38px;line-height:38px;padding-right:6.80px"><span>1.09</span></div>
<div class="d r" style="left:1909px;top:977px;width:77px;height:38px;line-height:38px;padding-right:6.95px"><span>29.1</span></div>
<div class="d r" style="left:1986px;top:977px;width:80px;height:38px;line-height:38px;padding-right:6.30px"><span>1.09</span></div>
<div class="d r" style="left:2066px;top:977px;width:105px;height:38px;line-height:38px;padding-right:6.95px"><span>559.1</span></div>
<div class="eb" style="top:979px;height:35px;line-height:34px;word-spacing:1.6px"><span style="display:inline-block;transform:scaleX(0.8957);transform-origin:0 50%">Edit Line</span></div>
<div class="bg" style="left:1400px;top:1015px;width:76px;height:39px;background:#d4e8f5"></div>
<div class="bg" style="left:1476px;top:1015px;width:81px;height:39px;background:#d4e8f5"></div>
<div class="bg" style="left:1909px;top:1015px;width:77px;height:39px;background:#d4e8f5"></div>
<div class="bg" style="left:1986px;top:1015px;width:80px;height:39px;background:#d4e8f5"></div>
<div class="d l" style="left:-5px;top:1015px;width:98px;height:39px;line-height:39px;padding-left:6.60px"><span style="display:inline-block;transform:scaleX(0.8885);transform-origin:0 50%">Fittings</span></div>
<div class="d l l2" style="left:93px;top:1015px;width:189px;height:39px;line-height:39px;padding-left:7.70px"><span style="display:inline-block;transform:scaleX(0.9843);transform-origin:0 50%">Rectangular Duct</span></div>
<div class="d r" style="left:282px;top:1015px;width:103px;height:39px;line-height:39px;padding-right:6.80px"><span>20,852</span></div>
<div class="d r" style="left:385px;top:1015px;width:90px;height:39px;line-height:39px;padding-right:6.80px"><span>280</span></div>
<div class="d r" style="left:475px;top:1015px;width:103px;height:39px;line-height:39px;padding-right:6.45px"><span>15,893</span></div>
<div class="d r" style="left:578px;top:1015px;width:143px;height:39px;line-height:39px;padding-right:6.45px"><span>$10,248.00</span></div>
<div class="d r" style="left:721px;top:1015px;width:143px;height:39px;line-height:39px;padding-right:6.70px"><span>$10,248.00</span></div>
<div class="d r" style="left:864px;top:1015px;width:144px;height:39px;line-height:39px;padding-right:6.30px"><span>$10,248.00</span></div>
<div class="d r" style="left:1008px;top:1015px;width:144px;height:39px;line-height:39px;padding-right:6.70px"><span>$10,248.00</span></div>
<div class="d r" style="left:1152px;top:1015px;width:98px;height:39px;line-height:39px;padding-right:7.20px"><span>487.5</span></div>
<div class="d r" style="left:1250px;top:1015px;width:71px;height:39px;line-height:39px;padding-right:6.30px"><span>42.8</span></div>
<div class="d r" style="left:1321px;top:1015px;width:79px;height:39px;line-height:39px;padding-right:6.95px"><span>1.04</span></div>
<div class="d r" style="left:1400px;top:1015px;width:76px;height:39px;line-height:39px;padding-right:6.20px"><span>39.2</span></div>
<div class="d r" style="left:1476px;top:1015px;width:81px;height:39px;line-height:39px;padding-right:6.80px"><span>1.09</span></div>
<div class="d r" style="left:1557px;top:1015px;width:97px;height:39px;line-height:39px;padding-right:6.30px"><span>507.0</span></div>
<div class="d r" style="left:1654px;top:1015px;width:105px;height:39px;line-height:39px;padding-right:6.80px"><span>655.2</span></div>
<div class="d r" style="left:1759px;top:1015px;width:72px;height:39px;line-height:39px;padding-right:6.95px"><span>31.8</span></div>
<div class="d r" style="left:1831px;top:1015px;width:78px;height:39px;line-height:39px;padding-right:6.80px"><span>1.09</span></div>
<div class="d r" style="left:1909px;top:1015px;width:77px;height:39px;line-height:39px;padding-right:6.95px"><span>29.2</span></div>
<div class="d r" style="left:1986px;top:1015px;width:80px;height:39px;line-height:39px;padding-right:6.30px"><span>1.09</span></div>
<div class="d r" style="left:2066px;top:1015px;width:105px;height:39px;line-height:39px;padding-right:6.95px"><span>681.4</span></div>
<div class="eb" style="top:1017px;height:36px;line-height:35px;word-spacing:1.6px"><span style="display:inline-block;transform:scaleX(0.8957);transform-origin:0 50%">Edit Line</span></div>
<svg width="2265" height="1052" viewBox="0 0 2265 1052" fill="#17181a"><rect x="0.00" y="411.70" width="579.05" height="1.60"/><rect x="1398.95" y="411.70" width="158.75" height="1.60"/><rect x="1908.10" y="411.70" width="159.10" height="1.60"/><rect x="0.00" y="482.90" width="2171.55" height="1.60"/><rect x="0.00" y="553.20" width="2265.00" height="1.60"/><rect x="0.00" y="591.63" width="2265.00" height="1.60"/><rect x="0.00" y="630.06" width="2265.00" height="1.60"/><rect x="0.00" y="668.49" width="2265.00" height="1.60"/><rect x="0.00" y="706.92" width="2265.00" height="1.60"/><rect x="0.00" y="745.35" width="2265.00" height="1.60"/><rect x="0.00" y="783.78" width="2265.00" height="1.60"/><rect x="0.00" y="822.21" width="2265.00" height="1.60"/><rect x="0.00" y="860.64" width="2265.00" height="1.60"/><rect x="0.00" y="899.07" width="2265.00" height="1.60"/><rect x="0.00" y="937.50" width="2265.00" height="1.60"/><rect x="0.00" y="975.93" width="2265.00" height="1.60"/><rect x="0.00" y="1014.36" width="2265.00" height="1.60"/><rect x="577.45" y="411.70" width="1.60" height="72.80"/><rect x="1398.95" y="411.70" width="1.60" height="72.80"/><rect x="1556.10" y="411.70" width="1.60" height="72.80"/><rect x="1908.10" y="411.70" width="1.60" height="72.80"/><rect x="2065.60" y="411.70" width="1.60" height="72.80"/><rect x="92.30" y="483.70" width="1.60" height="568.30"/><rect x="281.10" y="483.70" width="1.60" height="568.30"/><rect x="384.10" y="483.70" width="1.60" height="568.30"/><rect x="474.10" y="483.70" width="1.60" height="568.30"/><rect x="577.45" y="483.70" width="1.60" height="568.30"/><rect x="720.45" y="483.70" width="1.60" height="568.30"/><rect x="863.20" y="483.70" width="1.60" height="568.30"/><rect x="1007.60" y="483.70" width="1.60" height="568.30"/><rect x="1151.20" y="483.70" width="1.60" height="568.30"/><rect x="1248.70" y="483.70" width="1.60" height="568.30"/><rect x="1320.60" y="483.70" width="1.60" height="568.30"/><rect x="1398.95" y="483.70" width="1.60" height="568.30"/><rect x="1475.70" y="483.70" width="1.60" height="568.30"/><rect x="1556.10" y="483.70" width="1.60" height="568.30"/><rect x="1653.60" y="483.70" width="1.60" height="568.30"/><rect x="1758.10" y="483.70" width="1.60" height="568.30"/><rect x="1829.95" y="483.70" width="1.60" height="568.30"/><rect x="1908.10" y="483.70" width="1.60" height="568.30"/><rect x="1984.95" y="483.70" width="1.60" height="568.30"/><rect x="2065.60" y="483.70" width="1.60" height="568.30"/><rect x="2169.95" y="483.70" width="1.60" height="568.30"/></svg>
</body></html>
